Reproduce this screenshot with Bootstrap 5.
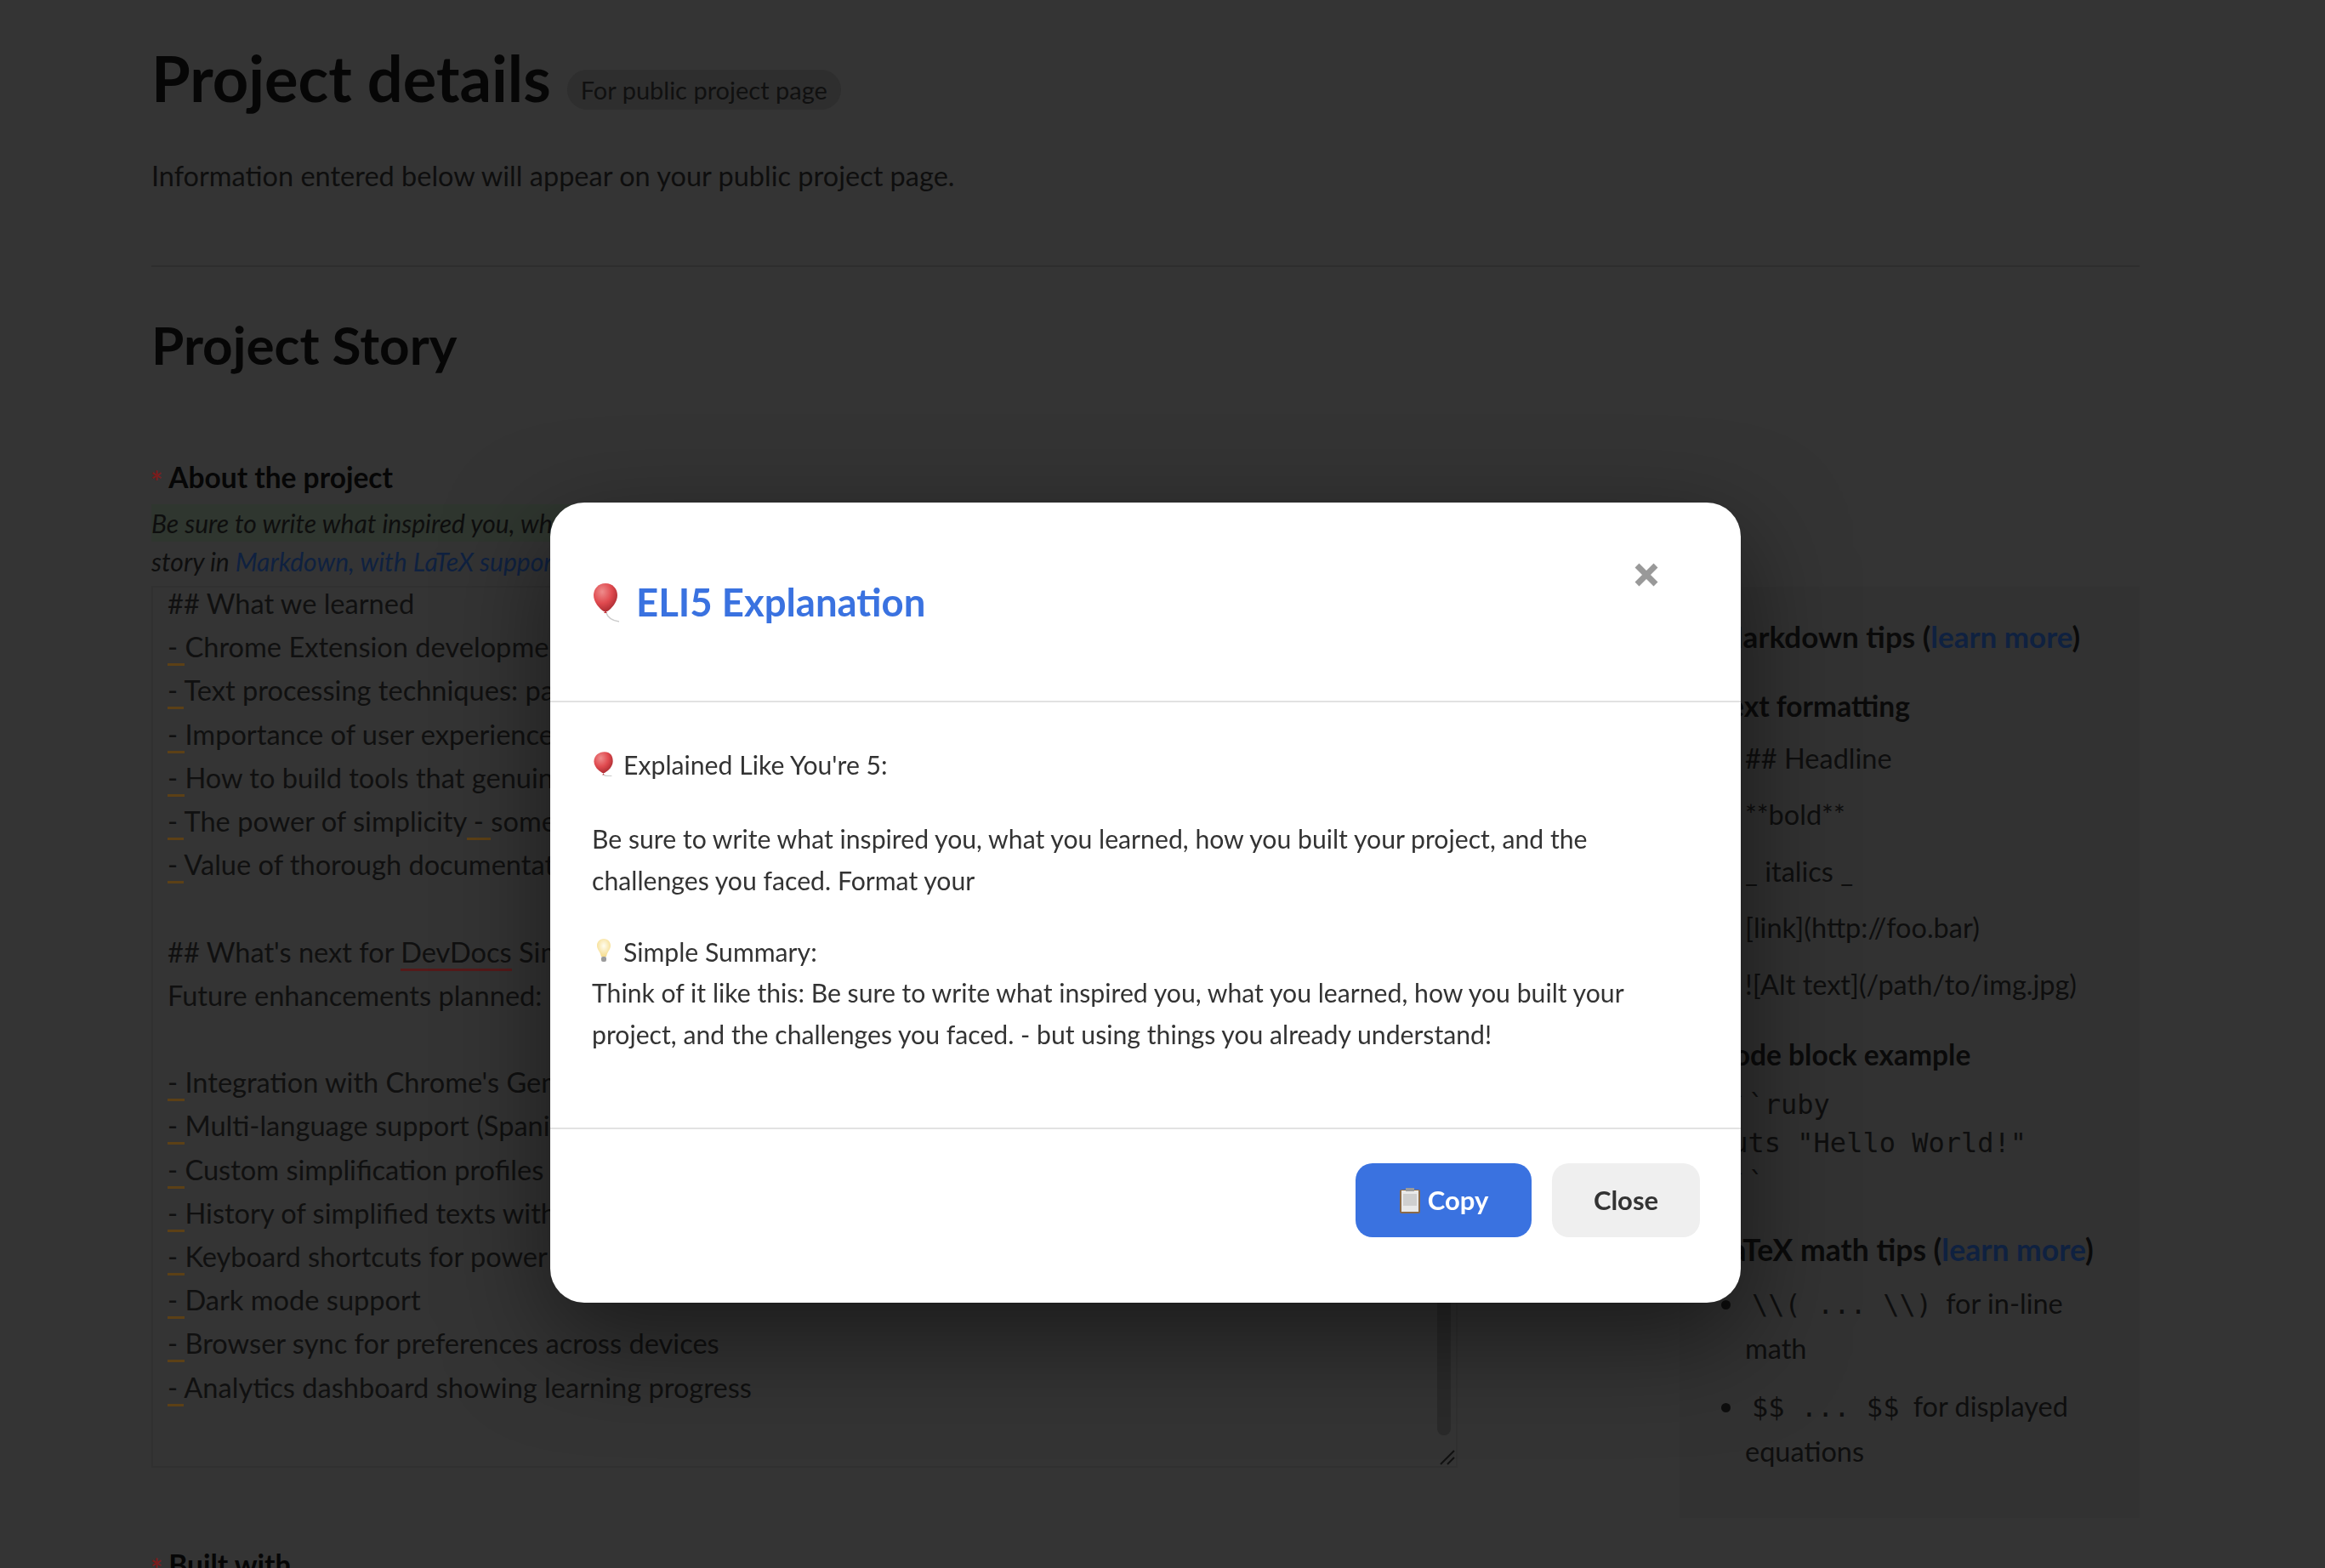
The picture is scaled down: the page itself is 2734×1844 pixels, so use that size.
<!DOCTYPE html>
<html lang="en">
<head>
  <meta charset="UTF-8">
  <meta name="viewport" content="width=device-width, initial-scale=1.0">
  <title>Project details</title>
  <link href="https://cdn.jsdelivr.net/npm/bootstrap@5.3.3/dist/css/bootstrap.min.css" rel="stylesheet">
  <style>
    html, body { height: 1844px; overflow: hidden; }
    body {
      background: #343434;
      color: #0e0e0e;
      font-family: "Lato", "Liberation Sans", sans-serif;
      font-size: 32.5px;
    }
    .page-wrap { margin-left: 178px; width: 2338px; padding-top: 43px; }
    .main-title { font-size: 74px; font-weight: 700; line-height: 98px; margin: 0; color: #060606; }
    .for-pill {
      background: #2e2e2e; color: #101010; font-size: 29px; font-weight: 400;
      border-radius: 24px; padding: 4px 16px; height: 47px; line-height: 39px; margin-left: 19px; margin-top: 26px;
    }
    .lead-txt { margin: 41px 0 0; line-height: 50px; }
    .page-rule { border: 0; border-top: 2px solid #2d2d2d; opacity: 1; margin: 80px 0 0; }
    .story-title { font-size: 62px; font-weight: 700; line-height: 80px; margin: 51px 0 0; color: #060606; }
    .field-label { font-weight: 700; font-size: 33.5px; line-height: 44px; margin: 94px 0 0; color: #060606; }
    .req { color: #7a1c1c; font-weight: 700; margin-right: 7px; margin-left: -1px; vertical-align: -5px; line-height: 0; }
    .help-line { font-style: italic; font-size: 30px; line-height: 45px; margin-top: 10px; width: 1536px; white-space: nowrap; }
    .help-mark { background: #2f362f; display: inline-block; height: 44px; line-height: 44px; vertical-align: top; }
    .blue-link { color: #0f2140; text-decoration: none; }
    .story-box {
      position: relative; width: 1536px; height: 1037px; margin-top: 6px; overflow: hidden;
      border: 2px solid #303030; padding-left: 17px;
    }
    .story-lines { margin-top: -7px; font-size: 32.6px; line-height: 51.2px; white-space: pre; color: #101010; }
    .sp { border-bottom: 3px solid #5c4016; }
    .sp-red { border-bottom: 3px solid #561a1a; }
    .fake-track { position: absolute; right: 6px; top: 0; bottom: 36px; width: 16px; background: #2a2a2a; border-radius: 8px; }
    .fake-grip { position: absolute; right: 0; bottom: 0; }
    .tips-box {
      width: 541px; height: 1095px; margin: 107px 0 -59px 261px; background: #323232;
      padding: 33px 0 0 42px; overflow: hidden; line-height: 50px; flex: none;
    }
    .tips-head { font-weight: 700; font-size: 35px; color: #0a0a0a; }
    .tips-sub { font-weight: 700; font-size: 33.5px; color: #0a0a0a; margin-top: 32px; }
    .tips-sub-wide { font-size: 35.5px; }
    .tips-rows { padding-left: 35px; margin-top: -5px; }
    .tips-rows div { margin-top: 16.5px; }
    .code-txt { font-family: "DejaVu Sans Mono", monospace; font-size: 32px; line-height: 45.5px; margin: 12px 0 0 0; color: #0e0e0e; overflow: visible; }
    .tips-list { padding: 0 40px 0 35px; margin: 12px 0 0; }
    .tips-list li { line-height: 51px; margin-bottom: 17px; }
    .tips-list code { font-family: "DejaVu Sans Mono", monospace; font-size: 32px; color: #0e0e0e; white-space: pre; padding: 0 8px; }
    .built-label { margin-top: 92px; }

    .modal-place { margin: 591px 0 0 647px; width: 1400px; max-width: none; }
    .eli-card {
      border: 0; border-radius: 40px; height: 941px; background: #fff; color: #333;
      box-shadow: 0 40px 120px rgba(0,0,0,.5);
    }
    .eli-head { height: 235px; padding: 2px 47px 0 49px; border-bottom: 2px solid #e2e2e2; position: relative; }
    .eli-title { font-size: 45.5px; font-weight: 700; color: #3a72e0; margin: 0; display: flex; align-items: center; }
    .eli-x { position: absolute; right: 97px; top: 71px; font-size: 0; background: none; border: 0; padding: 0; line-height: 0; }
    .eli-text { padding: 49px 49px 0; font-size: 30.2px; line-height: 48.5px; height: 500px; flex: none; }
    .eli-text p { margin: 0; }
    .eli-text .eli-para { margin-top: 38.5px; }
    .eli-text .eli-para-b { margin-top: 35.5px; }
    .eli-foot { height: 206px; padding: 40px 48px 0 0; border-top: 2px solid #e2e2e2; align-items: flex-start; justify-content: flex-end; gap: 24px; }
    .eli-btn { height: 87px; border: 0; border-radius: 20px; font-size: 31px; font-weight: 700; margin: 0; }
    .eli-copy { width: 207px; background: #3a72e0; color: #fff; }
    .eli-close { width: 174px; background: #efefef; color: #333; }
    .emo { display: inline-block; vertical-align: middle; }
    .emo-up { vertical-align: -2px; }
  </style>
</head>
<body>

  <div class="page-wrap">
    <div class="d-flex align-items-center">
      <h1 class="main-title">Project details</h1>
      <span class="for-pill">For public project page</span>
    </div>
    <p class="lead-txt">Information entered below will appear on your public project page.</p>
    <hr class="page-rule">
    <h2 class="story-title">Project Story</h2>

    <div class="field-label"><span class="req">*</span>About the project</div>
    <div class="d-flex">
      <div class="flex-shrink-0">
        <div class="help-line">
          <span class="help-mark">Be sure to write what inspired you, what you learned, how you built your project, and the challenges you faced. Format your</span><br>
          story in <a class="blue-link" href="#">Markdown, with LaTeX support</a>.
        </div>
        <div class="story-box">
          <div class="story-lines">## What we learned
<span class="sp">- </span>Chrome Extension development
<span class="sp">- </span>Text processing techniques: parsing and rewriting
<span class="sp">- </span>Importance of user experience
<span class="sp">- </span>How to build tools that genuinely help people
<span class="sp">- </span>The power of simplicity<span class="sp"> - </span>sometimes less is more
<span class="sp">- </span>Value of thorough documentation
&nbsp;
## What's next for <span class="sp-red">DevDocs</span> Simplifier
Future enhancements planned:
&nbsp;
<span class="sp">- </span>Integration with Chrome's Gemini Nano
<span class="sp">- </span>Multi-language support (Spanish, French)
<span class="sp">- </span>Custom simplification profiles
<span class="sp">- </span>History of simplified texts with search
<span class="sp">- </span>Keyboard shortcuts for power users
<span class="sp">- </span>Dark mode support
<span class="sp">- </span>Browser sync for preferences across devices
<span class="sp">- </span>Analytics dashboard showing learning progress</div>
          <div class="fake-track"></div>
          <svg class="fake-grip" width="22" height="22" viewBox="0 0 22 22"><path d="M4 20 20 4M12 20 20 12" stroke="#111" stroke-width="2" fill="none"/></svg>
        </div>
      </div>
      <aside class="tips-box">
        <div class="tips-head">Markdown tips (<a class="blue-link" href="#">learn more</a>)</div>
        <div class="tips-sub">Text formatting</div>
        <div class="tips-rows">
          <div>## Headline</div>
          <div>**bold**</div>
          <div>_ italics _</div>
          <div>[link](http://foo.bar)</div>
          <div>![Alt text](/path/to/img.jpg)</div>
        </div>
        <div class="tips-sub">Code block example</div>
        <pre class="code-txt">```ruby
puts "Hello World!"
```</pre>
        <div class="tips-sub tips-sub-wide">LaTeX math tips (<a class="blue-link" href="#">learn more</a>)</div>
        <ul class="tips-list">
          <li><code>\\( ... \\)</code> for in-line math</li>
          <li><code>$$ ... $$</code> for displayed equations</li>
        </ul>
      </aside>
    </div>
    <div class="field-label built-label"><span class="req">*</span>Built with</div>
  </div>

  <div class="modal d-block" tabindex="-1">
    <div class="modal-dialog modal-place">
      <div class="modal-content eli-card">
        <div class="modal-header eli-head">
          <h5 class="modal-title eli-title">
            <svg class="emo me-3" width="36" height="46" viewBox="0 0 36 46">
              <defs><radialGradient id="bal1" cx=".36" cy=".3" r=".75"><stop offset="0" stop-color="#ee8c8c"/><stop offset=".55" stop-color="#e04a4f"/><stop offset="1" stop-color="#a82a30"/></radialGradient></defs>
              <path d="M16 0C7 0 2 7 2 14c0 8 7 16 12 19h4c5-3 12-11 12-19C30 7 25 0 16 0z" fill="url(#bal1)"/>
              <path d="M14 35l2-3 2 3z" fill="#c23a40"/>
              <path d="M17 35c2 6 8 9 15 10" stroke="#ccc" stroke-width="1.5" fill="none"/>
            </svg>
            ELI5 Explanation
          </h5>
          <button type="button" class="eli-x" aria-label="Close">
            <svg width="28" height="28" viewBox="0 0 28 28"><path d="M3 3 25 25M25 3 3 25" stroke="#999" stroke-width="7"/></svg>
          </button>
        </div>
        <div class="modal-body eli-text">
          <p>
            <svg class="emo emo-up" width="37" height="30" viewBox="0 0 30 24.3">
              <defs><radialGradient id="bal2" cx=".36" cy=".3" r=".75"><stop offset="0" stop-color="#ee8c8c"/><stop offset=".55" stop-color="#e04a4f"/><stop offset="1" stop-color="#a82a30"/></radialGradient></defs>
              <path d="M12 1C6 1 2 5 2 10c0 5 4 9 8 11h2c4-2 8-6 8-11C20 5 18 1 12 1z" fill="url(#bal2)"/>
              <path d="M10 23l1-2 1 2z" fill="#c23a40"/>
              <path d="M11 23c2 1 4 1 8 1" stroke="#ccc" stroke-width="1" fill="none"/>
            </svg>Explained Like You're 5:
          </p>
          <p class="eli-para">Be sure to write what inspired you, what you learned, how you built your project, and the<br>challenges you faced. Format your</p>
          <p class="eli-para-b">
            <svg class="emo emo-up" width="37" height="30" viewBox="0 0 37 30">
              <defs><radialGradient id="bulb" cx=".5" cy=".4" r=".6"><stop offset="0" stop-color="#fffdf0"/><stop offset="1" stop-color="#f6dc8c"/></radialGradient></defs>
              <path d="M14 1C9 1 6 5 6 9c0 5 4 7 5 13h6c1-6 5-8 5-13 0-4-3-8-8-8z" fill="url(#bulb)"/>
              <rect x="11" y="22" width="6" height="6" rx="2" fill="#9b9b9b"/>
            </svg>Simple Summary:<br>Think of it like this: Be sure to write what inspired you, what you learned, how you built your<br>project, and the challenges you faced. - but using things you already understand!
          </p>
        </div>
        <div class="modal-footer eli-foot">
          <button type="button" class="btn eli-btn eli-copy d-inline-flex align-items-center justify-content-center">
            <svg class="me-2" width="26" height="30" viewBox="0 0 26 30">
              <rect x="1" y="2" width="24" height="28" rx="2" fill="#8a6a48"/>
              <rect x="3" y="3" width="20" height="25" fill="#e9e9e9"/>
              <rect x="5" y="7" width="16" height="14" fill="#cfcfcf"/>
              <rect x="8" y="0" width="10" height="4" fill="#9a9a9a"/>
            </svg>Copy
          </button>
          <button type="button" class="btn eli-btn eli-close">Close</button>
        </div>
      </div>
    </div>
  </div>

  <script src="https://cdn.jsdelivr.net/npm/bootstrap@5.3.3/dist/js/bootstrap.bundle.min.js"></script>
</body>
</html>
